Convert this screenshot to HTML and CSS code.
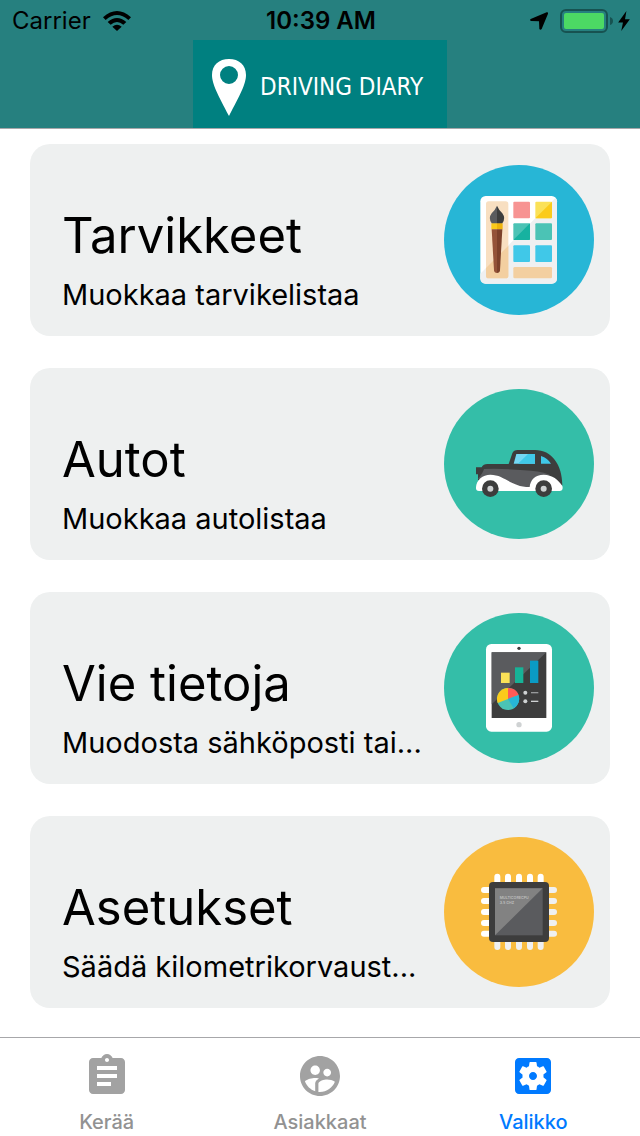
FILE: index.html
```html
<!DOCTYPE html>
<html lang="fi">

<head>
    <meta charset="UTF-8">
    <meta name="viewport" content="width=device-width, initial-scale=1.0">
    <title>Driving Diary</title>
    <link rel="stylesheet" href="styles.css">
</head>

<body>
    <header class="header">
        <div class="status">
            <div class="status-left">
                <span>Carrier</span>
                <svg class="wifi" viewBox="0 0 84 60">
                    <path d="M0 19Q42-19 84 19L76 27Q42-3 8 27Z" />
                    <path d="M14 33Q42 9 70 33L61 41Q42 25 23 41Z" />
                    <path d="M28 47Q42 35 56 47L42 60Z" />
                </svg>
            </div>
            <span class="time">10:39 AM</span>
            <div class="status-right">
                <svg class="location" viewBox="0 0 54 54">
                    <path d="M50 1Q55-1 54 5L35 51Q31 56 28 51L27 28L3 27Q-2 25 2 21Z" />
                </svg>
                <svg class="battery" viewBox="0 0 54 24">
                    <rect x="1" y="1" width="46" height="22" rx="5" fill="none" stroke="#175251" stroke-width="2" />
                    <rect x="4" y="4" width="40" height="16" rx="2" fill="#4cd964" />
                    <path d="M50 8q3 1 3 4t-3 4z" fill="#175251" />
                </svg>
                <svg class="bolt" viewBox="0 0 34 58">
                    <path d="M24 0L0 33H14L9 58L34 24H20Z" />
                </svg>
            </div>
        </div>
        <div class="logo">
            <svg class="pin" viewBox="0 0 34 57">
                <path fill="#fff" fill-rule="evenodd" d="M17 0C7 0 0 6 0 16C0 25 6 36 17 57C28 36 34 25 34 16C34 6 27 0 17 0ZM17 7A9 9 0 1 1 17 25A9 9 0 1 1 17 7Z" />
            </svg>
            <span>DRIVING DIARY</span>
        </div>
    </header>

    <main class="menu">
        <a class="card" href="#tarvikkeet">
            <div class="card-text">
                <h2>Tarvikkeet</h2>
                <p>Muokkaa tarvikelistaa</p>
            </div>
            <!-- paint box -->
            <svg class="card-icon" viewBox="27 30 450 450">
                <circle cx="252" cy="255" r="225" fill="#27b6d6" />
                <rect x="136" y="123" width="230" height="263" rx="16" fill="#fff" />
                <path d="M366 139V370Q366 386 350 386H152Q136 386 136 370V356L361 129Q366 133 366 139Z" fill="#eff0f1" />
                <rect x="153" y="139" width="67" height="231" rx="8" fill="#f8dfc1" />
                <path d="M220 272V362Q220 370 212 370H161Q153 370 153 362V339Z" fill="#f3cfa0" />
                <rect x="235" y="140" width="50" height="50" rx="3" fill="#f79392" />
                <rect x="301" y="140" width="50" height="50" rx="3" fill="#fbe157" />
                <path d="M351 140V187Q351 190 348 190H301Z" fill="#fbcb1b" />
                <rect x="235" y="205" width="50" height="50" rx="3" fill="#4bc3b5" />
                <path d="M285 205V252Q285 255 282 255H235Z" fill="#17b2a0" />
                <rect x="301" y="205" width="50" height="50" rx="3" fill="#4bc3b5" />
                <rect x="235" y="271" width="50" height="50" rx="3" fill="#40c8e8" />
                <rect x="301" y="271" width="50" height="50" rx="3" fill="#40c8e8" />
                <rect x="235" y="336" width="116" height="34" rx="4" fill="#f3cfa0" />
                <path d="M186 152Q181 164 170 175Q158 191 171 206H186Z" fill="#5a5b5e" />
                <path d="M186 152Q191 164 202 175Q214 191 201 206H186Z" fill="#3d3d3d" />
                <path d="M169 205H186V223H169Z" fill="#fbcb1b" />
                <path d="M186 205H203V223H186Z" fill="#efb40c" />
                <path d="M170 223H186V354Q178 354 177 346Z" fill="#945338" />
                <path d="M186 223H202L195 346Q194 354 186 354Z" fill="#7c412a" />
            </svg>
        </a>

        <a class="card" href="#autot">
            <div class="card-text">
                <h2>Autot</h2>
                <p>Muokkaa autolistaa</p>
            </div>
            <!-- car -->
            <svg class="card-icon" viewBox="27 27 450 450">
                <circle cx="252" cy="252" r="225" fill="#34bea8" />
                <path d="M123 262H140Q145 252 157 252H221L232 220Q236 210 248 210H300C350 210 382 254 382 316L340 326H270L129 300V283H123Z" fill="#3d3d3d" />
                <path d="M129 297Q145 277 147 267Q210 265 267 271Q310 272 344 284L290 325H250L170 296Z" fill="#5a5b5e" />
                <path d="M244 222H300V251H236Z" fill="#73d7f3" />
                <path d="M279 222H300V251H249Z" fill="#40c8e8" />
                <path d="M318 228Q338 235 348 251H318Z" fill="#40c8e8" />
                <path d="M123 322C124 300 143 284 166 284C210 284 226 321 284 321C286 300 300 284 326 284C352 284 370 299 382 318Q386 333 373 333H132Q122 333 123 322Z" fill="#fff" />
                <circle cx="166" cy="326" r="25" fill="#3d3d3d" />
                <circle cx="166" cy="326" r="9" fill="#cfd2d3" />
                <circle cx="326" cy="326" r="25" fill="#3d3d3d" />
                <circle cx="326" cy="326" r="9" fill="#cfd2d3" />
            </svg>
        </a>

        <a class="card" href="#vie">
            <div class="card-text">
                <h2>Vie tietoja</h2>
                <p>Muodosta sähköposti tai...</p>
            </div>
            <!-- tablet with charts -->
            <svg class="card-icon" viewBox="27 24 450 450">
                <circle cx="252" cy="249" r="225" fill="#34bea8" />
                <rect x="153" y="117" width="198" height="263" rx="16" fill="#fff" />
                <circle cx="252" cy="130" r="5" fill="#3d3d3d" />
                <circle cx="252" cy="359" r="8" fill="#cfd2d3" />
                <rect x="170" y="142" width="164" height="197" fill="#3d3d3d" />
                <path d="M170 142H334L170 298Z" fill="#5a5b5e" />
                <rect x="198" y="203" width="26" height="31" fill="#fbe157" />
                <rect x="240" y="187" width="25" height="47" fill="#17b297" />
                <rect x="285" y="167" width="25" height="67" fill="#0a9bc4" />
                <circle cx="219" cy="282" r="33" fill="#4bc3b5" />
                <path d="M219 282V249A33 33 0 0 0 188 294Z" fill="#fbcb1b" />
                <path d="M219 282V249A33 33 0 0 1 251 270Z" fill="#ff5a57" />
                <path d="M219 282L251 270A33 33 0 0 1 236 310Z" fill="#27b6d6" />
                <circle cx="271" cy="263" r="6" fill="#cfd2d3" />
                <circle cx="271" cy="289" r="6" fill="#cfd2d3" />
                <rect x="288" y="261" width="22" height="4" fill="#97999b" />
                <rect x="288" y="287" width="22" height="4" fill="#cfd2d3" />
            </svg>
        </a>

        <a class="card" href="#asetukset">
            <div class="card-text">
                <h2>Asetukset</h2>
                <p>Säädä kilometrikorvaust...</p>
            </div>
            <!-- processor -->
            <svg class="card-icon" viewBox="27 21 450 450">
                <circle cx="252" cy="246" r="225" fill="#f9bc3f" />
                <g fill="none" stroke-width="18" stroke-linecap="round">
                    <path stroke="#fff" d="M187 140V170M219 140V170M252 140V170M285 140V170M317 140V170M147 180H180M147 213H180M147 246H180M147 279H180M147 311H180" />
                    <path stroke="#eff0f1" d="M187 320V351M219 320V351M252 320V351M285 320V351M317 320V351M325 180H357M325 213H357M325 246H357M325 279H357M325 311H357" />
                </g>
                <rect x="162" y="156" width="180" height="180" rx="12" fill="#3d3d3d" />
                <rect x="180" y="175" width="143" height="141" fill="#5a5b5e" />
                <path d="M180 175H323L180 316Z" fill="#828282" />
                <text class="chip-text" x="194" y="206">MULTICORECPU</text>
                <text class="chip-text" x="194" y="221">3.5 GHZ</text>
            </svg>
        </a>
    </main>

    <nav class="tabs">
        <a class="tab" href="#keraa">
            <svg viewBox="0 0 24 24">
                <path d="M19 3h-4.18C14.4 1.84 13.3 1 12 1c-1.3 0-2.4.84-2.82 2H5c-1.1 0-2 .9-2 2v14c0 1.1.9 2 2 2h14c1.1 0 2-.9 2-2V5c0-1.1-.9-2-2-2zm-7 0c.55 0 1 .45 1 1s-.45 1-1 1-1-.45-1-1 .45-1 1-1zm2 14H7v-2h7v2zm3-4H7v-2h10v2zm0-4H7V7h10v2z" />
            </svg>
            <span>Kerää</span>
        </a>
        <a class="tab" href="#asiakkaat">
            <svg viewBox="0 0 24 24">
                <path d="M11.99 2c-5.52 0-10 4.48-10 10s4.48 10 10 10 10-4.48 10-10-4.48-10-10-10zm3.61 6.34c1.07 0 1.93.86 1.93 1.93 0 1.07-.86 1.93-1.93 1.93-1.07 0-1.93-.86-1.93-1.93-.01-1.07.86-1.93 1.93-1.93zm-6-1.58c1.3 0 2.36 1.06 2.36 2.36 0 1.3-1.06 2.36-2.36 2.36s-2.36-1.06-2.36-2.36c0-1.31 1.05-2.36 2.36-2.36zm0 9.13v3.75c-2.4-.75-4.3-2.6-5.14-4.96 1.05-1.12 3.67-1.69 5.14-1.69.53 0 1.2.08 1.9.22-1.64.87-1.9 2.02-1.9 2.68zM11.99 20c-.27 0-.53-.01-.79-.04v-4.07c0-1.42 2.94-2.13 4.4-2.13 1.07 0 2.92.39 3.84 1.15-1.17 2.97-4.06 5.09-7.45 5.09z" />
            </svg>
            <span>Asiakkaat</span>
        </a>
        <a class="tab active" href="#valikko">
            <svg viewBox="0 0 24 24">
                <path d="M12 10c-1.1 0-2 .9-2 2s.9 2 2 2 2-.9 2-2-.9-2-2-2zm7-7H5c-1.11 0-2 .9-2 2v14c0 1.1.89 2 2 2h14c1.11 0 2-.9 2-2V5c0-1.1-.89-2-2-2zm-1.75 9c0 .23-.02.46-.05.68l1.48 1.16c.13.11.17.3.08.45l-1.4 2.42c-.09.15-.27.21-.43.15l-1.74-.7c-.36.28-.76.51-1.18.69l-.26 1.85c-.03.17-.18.3-.35.3h-2.8c-.17 0-.32-.13-.35-.29l-.26-1.85c-.43-.18-.82-.41-1.18-.69l-1.74.7c-.16.06-.34 0-.43-.15l-1.4-2.42c-.09-.15-.05-.34.08-.45l1.48-1.16c-.03-.23-.05-.46-.05-.69 0-.23.02-.46.05-.68l-1.48-1.16c-.13-.11-.17-.3-.08-.45l1.4-2.42c.09-.15.27-.21.43-.15l1.74.7c.36-.28.76-.51 1.18-.69l.26-1.85c.03-.17.18-.3.35-.3h2.8c.17 0 .32.13.35.29l.26 1.85c.43.18.82.41 1.18.69l1.74-.7c.16-.06.34 0 .43.15l1.4 2.42c.09.15.05.34-.08.45l-1.48 1.16c.03.23.05.46.05.69z" />
            </svg>
            <span>Valikko</span>
        </a>
    </nav>
</body>

</html>
```

FILE: styles.css
```css
* {
    box-sizing: border-box;
}

body {
    margin: 0;
    min-height: 100vh;
    display: flex;
    flex-direction: column;
    background-color: white;
    color: black;
    font-family: Inter, "Liberation Sans", sans-serif;
}

a {
    color: inherit;
    text-decoration: none;
}

svg {
    display: block;
    flex-shrink: 0;
}

.header {
    background-color: #26807f;
    border-bottom: 1px solid #a7a7aa;
}

.status {
    display: grid;
    grid-template-columns: 1fr auto 1fr;
    align-items: center;
    height: 40px;
    padding: 2px 10px 0 12px;
    font-size: 24px;
    line-height: 28px;
}

.status-left,
.status-right {
    display: flex;
    align-items: center;
    gap: 12px;
}

.status-right {
    justify-content: flex-end;
}

.time {
    font-weight: 600;
}

.wifi {
    width: 28px;
    height: 20px;
}

.location {
    width: 18px;
    height: 18px;
}

.battery {
    width: 54px;
    height: 24px;
}

.bolt {
    width: 12px;
    height: 20px;
    margin-left: -8px;
}

.logo {
    display: flex;
    align-items: center;
    gap: 14px;
    width: 254px;
    height: 88px;
    margin: 0 auto;
    padding: 6px 0 0 19px;
    background-color: #008080;
    color: white;
    font-family: "DejaVu Sans Condensed", "DejaVu Sans", sans-serif;
    font-stretch: condensed;
    font-size: 24px;
    white-space: nowrap;
}

.pin {
    width: 34px;
    height: 57px;
}

.menu {
    flex: 1;
    display: flex;
    flex-direction: column;
    gap: 32px;
    padding: 15px 30px 29px;
}

.card {
    display: flex;
    align-items: center;
    height: 192px;
    padding: 0 16px 0 32px;
    border-radius: 20px;
    background-color: #eef0f0;
}

.card-text {
    flex: 1;
    min-width: 0;
    align-self: flex-end;
    padding-bottom: 21px;
    white-space: nowrap;
}

.card-text h2 {
    margin: 0 0 6px;
    font-size: 49px;
    font-weight: 400;
    line-height: 66px;
}

.card-text p {
    margin: 0;
    font-size: 29px;
    line-height: 40px;
}

.card-icon {
    width: 150px;
    height: 150px;
}

.chip-text {
    fill: #bdbdbd;
    font-size: 11px;
    font-weight: 600;
}

.tabs {
    display: grid;
    grid-template-columns: repeat(3, 1fr);
    height: 99px;
    border-top: 1px solid #a7a7aa;
}

.tab {
    display: flex;
    flex-direction: column;
    align-items: center;
    gap: 10px;
    padding-top: 14px;
    color: #929292;
    font-size: 20px;
    font-weight: 500;
    line-height: 24px;
}

.tab svg {
    width: 48px;
    height: 48px;
    fill: #a2a2a2;
}

.active {
    color: #007aff;
}

.active svg {
    fill: #007aff;
}
```
